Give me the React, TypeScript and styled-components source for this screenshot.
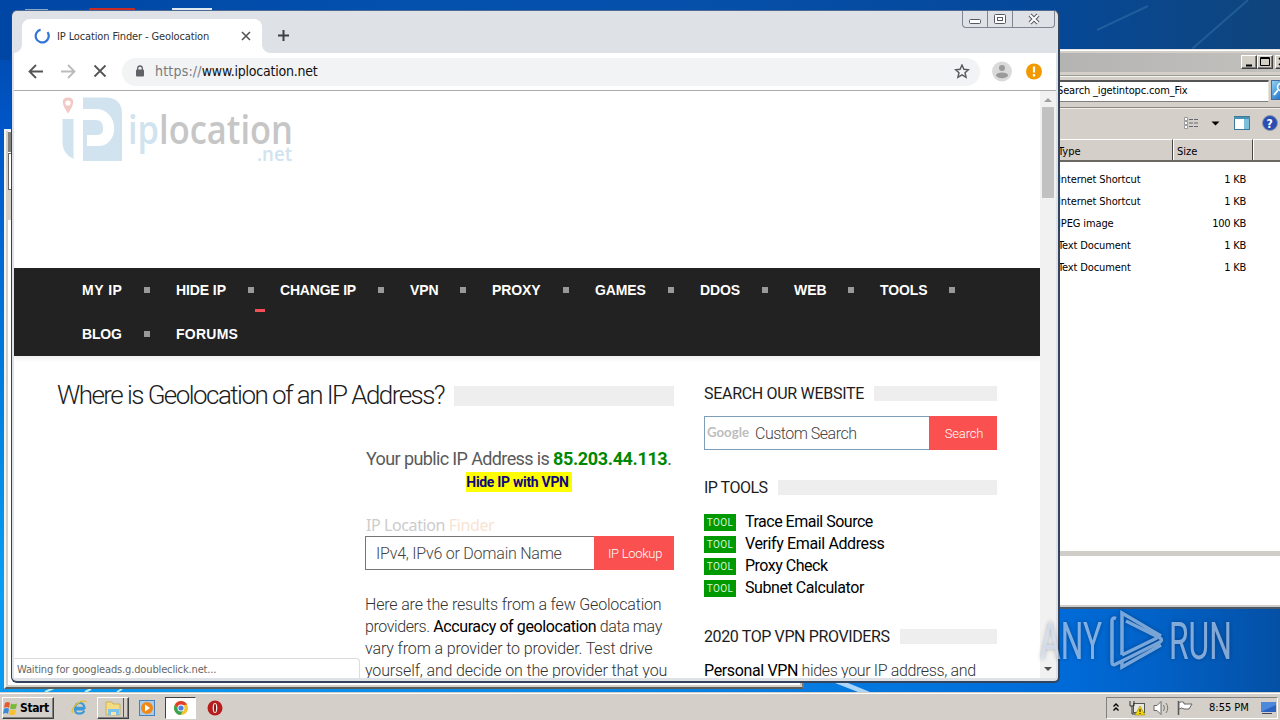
import React from "react";
import styled, { createGlobalStyle } from "styled-components";

const ui = `"DejaVu Sans Condensed", "DejaVu Sans", sans-serif`;
const web = `Roboto, "Open Sans", sans-serif`;

const Global = createGlobalStyle`
  * { box-sizing: border-box; }
  body { margin: 0; overflow: hidden; }
`;

const Label = styled.span<{ $ls?: number }>`
  white-space: pre;
  letter-spacing: ${(p) => p.$ls ?? 0}px;
`;

/* ---------- desktop ---------- */
const Desktop = styled.div`
  position: relative;
  width: 1280px;
  height: 720px;
  overflow: hidden;
  display: flex;
  flex-direction: column;
  justify-content: flex-end;
  font-family: ${ui};
  font-size: 11px;
  color: #000;
  background:
    linear-gradient(90deg, #0a9af0 0, #0a8ae8 45%, #006bd8 83%, #0262c8 90%, #0450a5 100%) 0 600px / 1280px 120px no-repeat,
    linear-gradient(90deg, #0046a4 0, #0350ae 30%, #0650aa 55%, #04489a 80%, #10457c 100%) 0 0 / 1280px 60px no-repeat,
    linear-gradient(180deg, #0046a4 0, #0056c8 130px, #0078dc 360px, #0aa0f4 600px, #0aa0f4 100%);
`;
const Wall = styled.svg`
  position: absolute;
  inset: 0;
`;

/* ---------- file manager windows ---------- */
const BackWindow = styled.div`
  position: absolute;
  left: 4px;
  top: 129px;
  width: 800px;
  height: 560px;
  background: #fff;
  border: 2px solid #d4d0c8;
  border-color: #e4f4fc #777 #5c5c58 #f4f4f0;
  box-shadow: inset 2px -2px 0 #d4d0c8, inset -2px 0 0 #c9c5bd;
  display: flex;
  flex-direction: column;
  padding: 1px 3px 1px 2px;
`;
const BackTitle = styled.div`height: 20px; background: #808080;`;
const BackBar = styled.div`height: 37px; border: 1px solid #666; background: #fff; margin-top: 1px;`;
const BackTool = styled.div`height: 30px; background: #d4d0c8;`;

const Explorer = styled.div`
  position: absolute;
  left: 1000px;
  top: 49px;
  width: 300px;
  height: 560px;
  background: #d4cfc8;
  border-top: 1px solid #e8e6e2;
  border-bottom: 2px solid #4c5866;
  box-shadow: inset 0 1px 0 #fff;
  display: flex;
  flex-direction: column;
`;
const ExTitle = styled.div`
  height: 19px;
  margin: 3px 0 3px;
  padding: 2px 0 2px 241px;
  display: flex;
  background: linear-gradient(90deg, #b0b0b0, #c4c2be);
`;
const ClassicButton = styled.div`
  width: 16px;
  height: 14px;
  background: #d4d0c8;
  border: 1px solid;
  border-color: #fff #404040 #404040 #fff;
  box-shadow: inset -1px -1px 0 #808080;
  & + & + & { margin-left: 2px; }
  svg { display: block; }
`;
const ExAddress = styled.div`
  height: 33px;
  border-top: 1px solid #9c9a94;
  border-bottom: 1px solid #8a8882;
  padding: 4px 0 4px;
  display: flex;
  box-shadow: inset 0 1px 0 #f4f4f0;
`;
const AddressField = styled.div`
  width: 269px;
  margin-right: 2px;
  height: 22px;
  padding-left: 56px;
  background: #fff;
  border: 1px solid #808080;
  border-top: 2px solid #555;
  border-right-color: #e8e4dc;
  line-height: 18px;
`;
const GoButton = styled.div`
  width: 24px;
  height: 20px;
  border: 1px solid #4a6c9c;
  background: linear-gradient(135deg, #8fd0f4, #2c7ed0 60%, #1a50a0);
`;
const ExTools = styled.div`
  height: 31px;
  display: flex;
  align-items: center;
  border-top: 1px solid #f2efea;
  padding-left: 183px;
`;
const ExHeader = styled.div`
  height: 23px;
  display: flex;
  border-bottom: 2px solid #6b6862;
  line-height: 23px;
`;
const HeadCell = styled.div<{ $w: number; $pad: number }>`
  flex: none;
  width: ${(p) => p.$w}px;
  padding-left: ${(p) => p.$pad}px;
  border-top: 1px solid #fff;
  border-left: 1px solid #fff;
  border-right: 1px solid #4a4844;
`;
const ExList = styled.div`
  flex: 1;
  background: #fff;
  padding-top: 7px;
`;
const ExRow = styled.div`
  display: flex;
  justify-content: space-between;
  width: 246px;
  height: 22px;
  line-height: 22px;
  padding-left: 58px;
`;
const ExDetails = styled.div`
  height: 56px;
  background: #fff;
  border-top: 5px solid #d0ccc8;
  border-bottom: 2px solid #d0ccc8;
`;

/* ---------- browser window ---------- */
const Browser = styled.div`
  position: absolute;
  left: 11px;
  top: 10px;
  width: 1049px;
  height: 673px;
  padding: 1px 2px 3px 2px;
  border: 1px solid #33445c;
  border-top-color: #4d6a92;
  border-right-width: 2px;
  border-bottom-width: 2px;
  border-radius: 6px;
  background: #dee1e6;
  display: flex;
  flex-direction: column;
`;
const TabStrip = styled.div`
  height: 41px;
  display: flex;
  align-items: flex-end;
  position: relative;
`;
const Tab = styled.div`
  width: 240px;
  height: 34px;
  margin-left: 8px;
  padding: 0 10px 0 12px;
  background: #fff;
  border-radius: 8px 8px 0 0;
  display: flex;
  align-items: center;
  color: #333;
  position: relative;
  &::before, &::after {
    content: "";
    position: absolute;
    bottom: 0;
    width: 8px;
    height: 8px;
  }
  &::before { left: -8px; background: radial-gradient(circle at 0 0, transparent 7.5px, #fff 8px); }
  &::after { right: -8px; background: radial-gradient(circle at 100% 0, transparent 7.5px, #fff 8px); }
  ${Label} { margin-left: 7px; flex: 1; }
`;
const NewTab = styled.svg`margin: 0 0 11px 15px;`;
const WinButtons = styled.div`
  position: absolute;
  right: 1px;
  top: -1px;
  display: flex;
  height: 17px;
  border: 1px solid #7e8590;
  border-top: 0;
  border-radius: 0 0 4px 4px;
`;
const WinButton = styled.div<{ $w: number }>`
  width: ${(p) => p.$w}px;
  display: flex;
  align-items: center;
  justify-content: center;
  & + & { border-left: 1px solid #7e8590; }
`;
const Toolbar = styled.div`
  height: 38px;
  background: #fff;
  border-bottom: 1px solid #a9abae;
  display: flex;
  align-items: center;
  padding-left: 14px;
  svg { flex: none; }
`;
const NavIcons = styled.div`display: flex; gap: 16px;`;
const Omnibox = styled.div`
  width: 858px;
  height: 28px;
  margin: 0 12px 0 14px;
  padding: 0 10px 0 12px;
  border-radius: 14px;
  background: #f1f3f4;
  display: flex;
  align-items: center;
  font-size: 14px;
`;
const Url = styled.div`flex: 1; margin: -2px 0 0 9px; color: #111;`;
const Scheme = styled(Label)`color: #777b80;`;
const Viewport = styled.div`
  flex: 1;
  min-height: 0;
  display: flex;
  position: relative;
  background: #fff;
`;
const Page = styled.div`
  width: 1026px;
  flex: none;
  overflow: hidden;
  background: #fff;
  font-family: ${web};
  color: #4c4c4c;
`;
const ScrollTrack = styled.div`
  width: 16px;
  background: #f1f1f1;
  display: flex;
  flex-direction: column;
  align-items: center;
`;
const Arrow = styled.svg`flex: none;`;
const Thumb = styled.div`width: 12px; height: 91px; background: #c1c1c1; margin-bottom: auto;`;
const Status = styled.div`
  position: absolute;
  left: 0;
  bottom: 0;
  width: 346px;
  height: 20px;
  padding-left: 3px;
  line-height: 21px;
  background: #fff;
  border: 1px solid #dcdcdc;
  border-width: 1px 1px 0 0;
  border-radius: 0 4px 0 0;
  color: #666;
`;

/* ---------- page ---------- */
const Masthead = styled.header`height: 177px; padding: 4px 0 0 46px;`;
const Menu = styled.nav`
  height: 88px;
  background: #222;
  padding: 0 40px 0 68px;
  display: flex;
  flex-wrap: wrap;
  position: relative;
  box-shadow: 0 3px 5px #0001;
`;
const MenuItem = styled.a<{ $w: number }>`
  width: ${(p) => p.$w}px;
  height: 44px;
  display: flex;
  align-items: center;
  justify-content: space-between;
  padding-right: 26px;
  font: bold 14px "Liberation Sans", sans-serif;
  color: #fff;
`;
const Dot = styled.i`width: 6px; height: 6px; background: #999;`;
const Marker = styled.i`
  position: absolute;
  left: 241px;
  top: 41px;
  width: 10px;
  height: 3px;
  background: #f55058;
`;
const Columns = styled.div`display: flex; gap: 30px; padding: 27px 0 0 43px;`;
const MainCol = styled.main`width: 617px;`;
const Side = styled.aside`width: 293px;`;
const Heading = styled.h2<{ $size: number; $h: number; $bar: number }>`
  margin: 0;
  height: ${(p) => p.$h}px;
  display: flex;
  align-items: center;
  gap: 10px;
  font-weight: 300;
  font-size: ${(p) => p.$size}px;
  color: #1c1c1c;
  ${Label} { margin-top: -2px; }
  &::after {
    content: "";
    flex: 1;
    height: ${(p) => p.$bar}px;
    background: #eee;
  }
`;
const SideHeading = styled(Heading)`
  font-weight: 400;
  ${Label} { margin-top: 1px; }
`;
const Result = styled.section`width: 309px; margin: 38px 0 0 308px;`;
const PublicIp = styled.p`
  margin: 0;
  padding-left: 1px;
  font-size: 18px;
  line-height: 24px;
  color: #5a5a5a;
  b { color: #080; font-weight: 700; letter-spacing: -0.36px; }
`;
const Hide = styled.div`
  display: flex;
  align-items: center;
  justify-content: center;
  width: 106px;
  height: 20px;
  margin: 1px 0 0 101px;
  padding-right: 3px;
  background: #ff0;
  color: #10087c;
  font-size: 14px;
  font-weight: 700;
`;
const FormLabel = styled.div`
  margin: 23px 0 0 1px;
  height: 21px;
  font: 16px/21px "Noto Sans", sans-serif;
  color: #ccc;
  em { font-style: normal; color: #f8e4d2; }
`;
const Form = styled.div`display: flex; height: 34px;`;
const Field = styled.div<{ $c: string; $pad: number }>`
  flex: 1;
  display: flex;
  align-items: center;
  gap: 6px;
  border: 1px solid ${(p) => p.$c};
  border-right: 0;
  padding-left: ${(p) => p.$pad}px;
  font-size: 16px;
  font-weight: 300;
  color: #444;
`;
const Submit = styled.div<{ $w: number }>`
  width: ${(p) => p.$w}px;
  display: flex;
  align-items: center;
  justify-content: center;
  background: #fa5050;
  color: #fff;
  font-size: 13px;
  font-weight: 300;
  padding-left: 2px;
`;
const Copy = styled.p`
  margin: 24px 0 0;
  font-size: 16px;
  font-weight: 300;
  line-height: 22px;
  color: #333;
  a { color: #000; font-weight: 400; }
  ${Label} { display: block; }
`;
const SideCopy = styled(Copy)`margin-top: 14px;`;
const SearchForm = styled(Form)`margin: 13px 0 27px;`;
const Tools = styled.ul`list-style: none; margin: 13px 0 28px; padding: 0;`;
const Badge = styled.span`
  width: 32px;
  height: 17px;
  margin-top: 2px;
  background: #090;
  color: #d8f4d8;
  font-size: 10px;
  letter-spacing: 0.4px;
  line-height: 17px;
  text-align: center;
`;
const Tool = styled.li`
  height: 22px;
  display: flex;
  align-items: center;
  gap: 9px;
  font-size: 16px;
  color: #000;
  ${Label} { margin-top: 1px; }
`;

/* ---------- taskbar ---------- */
const Taskbar = styled.footer`
  position: relative;
  height: 28px;
  background: #d4cfc8;
  border-top: 1px solid #d4d0c8;
  box-shadow: inset 0 1px 0 #fff;
  display: flex;
  align-items: center;
  padding: 2px 2px 0 2px;
`;
const Start = styled.div`
  width: 52px;
  height: 22px;
  border: 1px solid;
  border-color: #fff #404040 #404040 #fff;
  box-shadow: inset -1px -1px 0 #808080;
  display: flex;
  align-items: center;
  font: bold 12px "DejaVu Sans Condensed", sans-serif;
  gap: 1px;
`;
const TaskIcon = styled.div<{ $ml: number; $w: number; $mode?: "raised" | "pressed" }>`
  width: ${(p) => p.$w}px;
  height: 22px;
  margin-left: ${(p) => p.$ml}px;
  display: flex;
  align-items: center;
  justify-content: center;
  border: ${(p) => (p.$mode ? 1 : 0)}px solid;
  border-color: ${(p) => (p.$mode === "pressed" ? "#404040 #fff #fff #404040" : "#fff #404040 #404040 #fff")};
  background: ${(p) => (p.$mode === "pressed" ? "#fff" : "transparent")};
  box-shadow: ${(p) => (p.$mode === "raised" ? "inset -1px -1px 0 #808080, inset -4px 0 0 #d4cfc8, inset -5px 0 0 #555" : "none")};
`;
const Tray = styled.div`
  margin-left: auto;
  width: 172px;
  height: 22px;
  border: 1px solid;
  border-color: #808080 #fff #fff #808080;
  display: flex;
  align-items: center;
  padding-left: 5px;
  svg { flex: none; }
`;
const Clock = styled(Label)`margin: 0 11px 0 15px;`;

const Watermark = styled.svg`
  position: absolute;
  left: 1030px;
  top: 600px;
  pointer-events: none;
  filter: drop-shadow(0 0 2px #0007);
`;

const files = [
  ["Internet Shortcut", "1 KB"],
  ["Internet Shortcut", "1 KB"],
  ["JPEG image", "100 KB"],
  ["Text Document", "1 KB"],
  ["Text Document", "1 KB"],
];
const menu: [string, number, number][] = [
  ["MY IP", 94, 0.5], ["HIDE IP", 104, -0.1], ["CHANGE IP", 130, -0.2], ["VPN", 82, -0.1], ["PROXY", 103, -0.1],
  ["GAMES", 105, -0.1], ["DDOS", 94, -0.1], ["WEB", 86, 0], ["TOOLS", 101, -0.1], ["BLOG", 94, -0.15], ["FORUMS", 120, 0.25],
];
const tools: [string, number][] = [
  ["Trace Email Source", -0.5], ["Verify Email Address", -0.38], ["Proxy Check", -0.5], ["Subnet Calculator", -0.43],
];

const SiteLogo = () => (
  <svg width="240" height="75" viewBox="60 95 240 75">
    <path d="M68 97.500c-7 0-7 6.500 0 16 7-9.500 7-16 0-16z" fill="#f3c9c6" />
    <circle cx="68" cy="103" r="2.600" fill="#fff" />
    <path d="M62.500 119H73.500V159Q62.500 154 62.500 142Z" fill="#d0e3ee" />
    <path d="M83 97.500H106Q122 98 122 114V161H83Z" fill="#d0e3ee" />
    <path d="M83 114.500H96C112 114.500 113 140.500 98 140.500H87" fill="none" stroke="#fff" strokeWidth="11" />
    <g fontFamily="Open Sans, sans-serif">
      <text x="128" y="144" fontSize="40" textLength="165" lengthAdjust="spacingAndGlyphs" fontWeight="600" fill="#c6c6c6"><tspan fill="#d0e3ee">ip</tspan>location</text>
      <text x="257" y="161" fontSize="20" textLength="35" lengthAdjust="spacingAndGlyphs" fontWeight="600" fill="#d0e3ee">.net</text>
    </g>
  </svg>
);

const ChromeMark = () => (
  <svg width="16" height="16" viewBox="0 0 16 16">
    <circle cx="8" cy="8" r="7" fill="#f6c32c" />
    <path d="M1.900 4.600A7 7 0 0 1 14.100 4.600L8 5.500 5 9Z" fill="#df3e30" />
    <path d="M1.900 4.600A7 7 0 0 0 7.500 15L10 10.500 5.500 10Z" fill="#39a355" />
    <circle cx="8" cy="8" r="3.500" fill="#fff" />
    <circle cx="8" cy="8" r="2.600" fill="#4a82e8" />
  </svg>
);

export default function App() {
  return (
    <Desktop>
      <Global />
      <Wall width="1280" height="720">
        <path d="M1097 30L1148 6M1192 49L1248 0" stroke="#4a86b8" strokeWidth="2" opacity=".35" />
        <rect x="25" y="9" width="23" height="2" fill="#8ba8cc" />
        <rect x="89" y="8" width="46" height="3" rx="1" fill="#cc2a24" />
        <rect x="172" y="8" width="40" height="3" fill="#dfe9f2" />
        <path d="M835 683L848 683 870 692 858 692Z" fill="#d8ecfc" opacity=".8" />
        <path d="M45 692l9-4M85 692l6-3M117 692l5-3" stroke="#b8ecf0" strokeWidth="2" />
      </Wall>

      <BackWindow>
        <BackTitle />
        <BackBar />
        <BackTool />
      </BackWindow>

      <Explorer>
        <ExTitle>
          <ClassicButton><svg width="14" height="12"><path d="M4 9.500h6" stroke="#000" strokeWidth="2" /></svg></ClassicButton>
          <ClassicButton><svg width="14" height="12"><path d="M2.500 1.500h9v8h-9zM2 2.500h10" fill="none" stroke="#000" /></svg></ClassicButton>
          <ClassicButton><svg width="14" height="12"><path d="M3 2l7 7M10 2l-7 7" stroke="#000" strokeWidth="1.500" /></svg></ClassicButton>
        </ExTitle>
        <ExAddress>
          <AddressField><Label $ls={-0.15}>Search _igetintopc.com_Fix</Label></AddressField>
          <GoButton><svg width="20" height="18"><circle cx="9" cy="6" r="3.500" fill="none" stroke="#fff" strokeWidth="1.500" /><path d="M6 9l-4 5" stroke="#fff" strokeWidth="2" /></svg></GoButton>
        </ExAddress>
        <ExTools>
          <svg width="97" height="18">
            <path d="M1.500 2.500h3v3h-3zM1.500 6.500h3v3h-3zM1.500 10.500h3v3h-3z" fill="#fff" stroke="#888" strokeWidth=".8" />
            <path d="M6 4.500h9M6 8h9M6 11.500h9" stroke="#667" strokeDasharray="4 1" />
            <path d="M28.500 6.500h8l-4 4z" fill="#000" />
            <rect x="51.500" y="1.500" width="15" height="13" fill="#fff" stroke="#3a7a9c" />
            <rect x="61" y="3" width="5" height="11" fill="#7cc0dc" />
            <path d="M51 3h16" stroke="#4a90b4" strokeWidth="2" />
            <circle cx="87" cy="8" r="7.500" fill="#2a4fb4" stroke="#8c96a8" />
            <text x="83.500" y="12.500" fontSize="12" fontWeight="bold" fill="#fff">?</text>
          </svg>
        </ExTools>
        <ExHeader>
          <HeadCell $w={173} $pad={57}>Type</HeadCell>
          <HeadCell $w={80} $pad={3}>Size</HeadCell>
          <HeadCell $w={60} $pad={0} />
        </ExHeader>
        <ExList>
          {files.map(([t, s], i) => (
            <ExRow key={i}><Label $ls={-0.12}>{t}</Label><Label $ls={-0.25}>{s}</Label></ExRow>
          ))}
        </ExList>
        <ExDetails />
      </Explorer>

      <Browser>
        <TabStrip>
          <Tab>
            <svg width="16" height="16"><path d="M7.500 1.500A6.500 6.500 0 1 0 14 5" fill="none" stroke="#2f76d8" strokeWidth="2.200" transform="rotate(-8 8 8)" /></svg>
            <Label $ls={-0.13}>IP Location Finder - Geolocation</Label>
            <svg width="12" height="12"><path d="M2 2l8 8M10 2l-8 8" stroke="#555" strokeWidth="1.600" /></svg>
          </Tab>
          <NewTab width="13" height="13"><path d="M6.500 1v11M1 6.500h11" stroke="#3c4043" strokeWidth="2" /></NewTab>
          <WinButtons>
            <WinButton $w={24}><svg width="14" height="12"><rect x="1.500" y="6.500" width="11" height="4" rx="1" fill="#fff" stroke="#555a66" /></svg></WinButton>
            <WinButton $w={25}><svg width="14" height="12"><rect x="1.500" y="1.500" width="11" height="9" rx="1" fill="#fff" stroke="#555a66" /><rect x="4.500" y="4.500" width="5" height="3" fill="#fff" stroke="#555a66" /></svg></WinButton>
            <WinButton $w={42}><svg width="14" height="12"><path d="M3 2l8 8M11 2l-8 8" stroke="#555a66" strokeWidth="4" /><path d="M3 2l8 8M11 2l-8 8" stroke="#fff" strokeWidth="2" /></svg></WinButton>
          </WinButtons>
        </TabStrip>
        <Toolbar>
          <NavIcons>
            <svg width="16" height="16"><path d="M15 7.500H2M8 1L1.500 7.500 8 14" fill="none" stroke="#555" strokeWidth="1.800" /></svg>
            <svg width="16" height="16"><path d="M1 7.500h13M8 1L14.500 7.500 8 14" fill="none" stroke="#bbb" strokeWidth="1.800" /></svg>
            <svg width="16" height="16"><path d="M2.500 1.500l11 11M13.500 1.500l-11 11" stroke="#555" strokeWidth="1.800" /></svg>
          </NavIcons>
          <Omnibox>
            <svg width="12" height="14"><rect x="2" y="4.500" width="8" height="7" rx="1" fill="#5f6368" /><path d="M3.700 5.500V3.300a2.300 2.300 0 0 1 4.600 0V5.500" fill="none" stroke="#5f6368" strokeWidth="1.300" /></svg>
            <Url><Scheme $ls={0.2}>https://</Scheme><Label $ls={-0.22}>www.iplocation.net</Label></Url>
            <svg width="16" height="16"><path d="M8 1l1.900 4.300 4.600.4-3.500 3 1.100 4.600L8 10.900l-4.100 2.400L5 8.700 1.500 5.700l4.600-.4z" fill="none" stroke="#555a5e" strokeWidth="1.400" /></svg>
          </Omnibox>
          <svg width="52" height="22">
            <circle cx="10" cy="10.500" r="10" fill="#dadada" /><circle cx="10" cy="7" r="3" fill="#9a9a9a" /><ellipse cx="10" cy="14.300" rx="6" ry="2.900" fill="#9a9a9a" />
            <circle cx="42" cy="10.500" r="8" fill="#f29900" /><path d="M42 5.500v6M42 13v2.500" stroke="#fff" strokeWidth="2.200" />
          </svg>
        </Toolbar>
        <Viewport>
          <Page>
            <Masthead><SiteLogo /></Masthead>
            <Menu>
              {menu.map(([t, w, ls], i) => (
                <MenuItem key={t} $w={w}><Label $ls={ls}>{t}</Label>{i < 10 && <Dot />}</MenuItem>
              ))}
              <Marker />
            </Menu>
            <Columns>
              <MainCol>
                <Heading $size={26} $h={26} $bar={20}><Label $ls={-1.56}>Where is Geolocation of an IP Address?</Label></Heading>
                <Result>
                  <PublicIp><Label $ls={-0.62}>Your public IP Address is <b>85.203.44.113</b>.</Label></PublicIp>
                  <Hide><Label $ls={-0.3}>Hide IP with VPN</Label></Hide>
                  <FormLabel><Label $ls={-0.4}>IP Location <em>Finder</em></Label></FormLabel>
                  <Form>
                    <Field $c="#767676" $pad={10}><Label $ls={-0.24}>IPv4, IPv6 or Domain Name</Label></Field>
                    <Submit $w={80}><Label $ls={-0.3}>IP Lookup</Label></Submit>
                  </Form>
                  <Copy>
                    <Label $ls={-0.17}>Here are the results from a few Geolocation</Label>
                    <Label $ls={-0.4}>providers. <a>Accuracy of geolocation</a> data may</Label>
                    <Label $ls={-0.13}>vary from a provider to provider. Test drive</Label>
                    <Label $ls={-0.14}>yourself, and decide on the provider that you</Label>
                  </Copy>
                </Result>
              </MainCol>
              <Side>
                <SideHeading $size={16} $h={20} $bar={15}><Label $ls={-0.3}>SEARCH OUR WEBSITE</Label></SideHeading>
                <SearchForm>
                  <Field $c="#7e9db9" $pad={2}>
                    <svg width="42" height="18"><text x="0" y="13" fontFamily="Lato, sans-serif" fontWeight="700" fontSize="13" textLength="42" lengthAdjust="spacingAndGlyphs" fill="#bdbdbd">Google</text></svg>
                    <Label $ls={-0.5}>Custom Search</Label>
                  </Field>
                  <Submit $w={68}><Label $ls={-0.2}>Search</Label></Submit>
                </SearchForm>
                <SideHeading $size={16} $h={20} $bar={15}><Label $ls={-0.5}>IP TOOLS</Label></SideHeading>
                <Tools>
                  {tools.map(([t, ls]) => (
                    <Tool key={t}><Badge>TOOL</Badge><Label $ls={ls}>{t}</Label></Tool>
                  ))}
                </Tools>
                <SideHeading $size={16} $h={20} $bar={15}><Label $ls={-0.38}>2020 TOP VPN PROVIDERS</Label></SideHeading>
                <SideCopy><Label $ls={-0.36}><a>Personal VPN</a> hides your IP address, and</Label></SideCopy>
              </Side>
            </Columns>
          </Page>
          <ScrollTrack>
            <Arrow width="16" height="16"><path d="M4 11h8l-4-4z" fill="#a0a0a0" /></Arrow>
            <Thumb />
            <Arrow width="16" height="17"><path d="M4 6h8l-4 4z" fill="#505050" /></Arrow>
          </ScrollTrack>
          <Status><Label $ls={-0.14}>Waiting for googleads.g.doubleclick.net...</Label></Status>
        </Viewport>
      </Browser>

      <Taskbar>
        <Start>
          <svg width="16" height="16"><path d="M2 3q3-2 5 0l-1 5q-2-2-5 0z" fill="#e8592c" /><path d="M8 3.500q3 1.500 6 0l-1 5q-3 1.500-6 0z" fill="#7ab83c" /><path d="M1 9q3-2 5 0l-1 5q-2-2-5 0z" fill="#3a8ad8" /><path d="M7 9.500q3 1.500 6 0l-1 5q-3 1.500-6 0z" fill="#f8c030" /></svg>
          <Label $ls={-0.4}>Start</Label>
        </Start>
        <TaskIcon $ml={17} $w={17}>
          <svg width="17" height="17"><path d="M13.500 10.500H4.500M4 8.800h9.500Q13 4 8.800 4T4 9.500 8.800 14.500Q12 14.500 13.300 12" fill="none" stroke="#3c9ad8" strokeWidth="2.200" /><path d="M1.500 14Q0 10 6 5T15.500 3" fill="none" stroke="#e8c030" strokeWidth="1.300" /></svg>
        </TaskIcon>
        <TaskIcon $ml={9} $w={32} $mode="raised">
          <svg width="17" height="16"><path d="M1 2h6l1 2h7v11H1z" fill="#f4dc84" stroke="#c8a848" strokeWidth=".8" /><path d="M3 9h11v6H3z" fill="#7cc4ec" /><path d="M6 15v-3h5v3" fill="#f4e8b0" /></svg>
        </TaskIcon>
        <TaskIcon $ml={10} $w={16}>
          <svg width="16" height="16"><rect x=".5" y=".5" width="15" height="15" fill="#a8cdee" stroke="#4a80b8" /><circle cx="8" cy="8" r="6" fill="#f08818" /><path d="M6 4.500v7l5-3.500z" fill="#fff" /></svg>
        </TaskIcon>
        <TaskIcon $ml={10} $w={31} $mode="pressed"><ChromeMark /></TaskIcon>
        <TaskIcon $ml={11} $w={16}>
          <svg width="16" height="16"><circle cx="8" cy="8" r="7.500" fill="#b81c1c" /><ellipse cx="8" cy="8" rx="2.300" ry="5" fill="#f4ece8" /><ellipse cx="8" cy="8" rx="1" ry="4.200" fill="#8c1010" /></svg>
        </TaskIcon>
        <Tray>
          <svg width="82" height="18">
            <path d="M1.500 7.500l2.500-2.500 2.500 2.500M1.500 11.500l2.500-2.500 2.500 2.500" fill="none" stroke="#000" strokeWidth="1.400" />
            <rect x="21.500" y="4.500" width="11" height="9" fill="#e8e8e0" stroke="#555" /><path d="M18 2v5h4V2M20 7v8h6" fill="none" stroke="#333" /><path d="M28 7l5 9h-10z" fill="#f4d800" stroke="#a08800" strokeWidth=".6" /><path d="M28 10v3M28 14v1" stroke="#000" />
            <path d="M42 6.500h3l4-4v13l-4-4h-3z" fill="#fff" stroke="#666" /><path d="M51.500 6q2 3 0 6M54 4q3.500 5 0 10" fill="none" stroke="#777" />
            <path d="M66.500 2v14" stroke="#555" strokeWidth="1.500" /><path d="M67 3.500q3-1.500 5 0v1.500h8l-3 5h-5q-2-2-5 0z" fill="#fff" stroke="#666" />
          </svg>
          <Clock>8:55 PM</Clock>
          <svg width="17" height="14"><rect x="1" y="1" width="15" height="10" fill="#2c62c0" /><path d="M1 11L16 4V1H1z" fill="#4c88dc" /><path d="M2 12.500h10" stroke="#446" /></svg>
        </Tray>
      </Taskbar>

      <Watermark width="210" height="90" viewBox="1030 600 210 90">
        <g fill="#d8e8ff" fillOpacity=".6" fontFamily="Roboto, sans-serif" fontSize="51">
          <text x="1040" y="659" textLength="62" lengthAdjust="spacingAndGlyphs">ANY</text>
          <text x="1169" y="659" textLength="63" lengthAdjust="spacingAndGlyphs">RUN</text>
          <path d="M1116 618.500Q1112 617 1112 621V662Q1112 666 1116 664L1160 642Q1163 640 1160 638L1126 621M1122 655V613L1161 636M1122 655L1157 638M1122 662V667L1161 645" fill="none" stroke="#b8d4f8" strokeOpacity=".65" strokeWidth="3.500" />
        </g>
      </Watermark>
    </Desktop>
  );
}
